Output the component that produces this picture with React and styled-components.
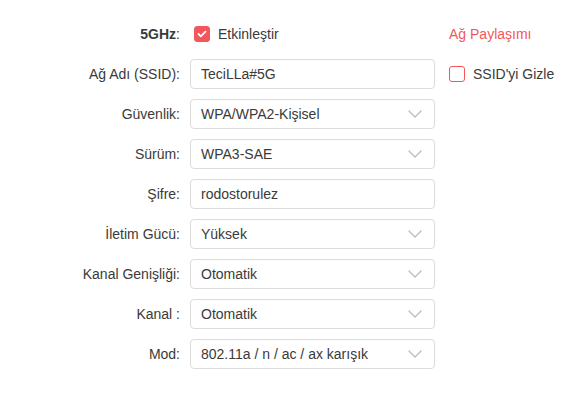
import React from "react";
import styled, { createGlobalStyle } from "styled-components";

const Global = createGlobalStyle`
  html, body { margin: 0; padding: 0; background: #fff; }
  body { font-family: Arial, "Liberation Sans", Helvetica, sans-serif; font-size: 14px; color: #333; }
`;

const Form = styled.div`
  display: grid;
  grid-template-columns: 180px 245px auto;
  column-gap: 10px;
  row-gap: 10px;
  grid-auto-rows: 30px;
  padding-top: 19px;
  width: 585px;
`;

const Label = styled.div`
  display: flex;
  align-items: center;
  justify-content: flex-end;
  color: #3a3a3a;
  font-size: 14px;
  white-space: nowrap;
`;

const Strong = styled.b`
  font-weight: bold;
`;

const Cell = styled.div`
  display: flex;
  align-items: center;
  gap: 8px;
  padding-left: 4px;
  font-size: 14px;
  color: #3a3a3a;
  white-space: nowrap;
`;

const Box = styled.span`
  box-sizing: border-box;
  width: 16px;
  height: 16px;
  border-radius: 3px;
  display: inline-flex;
  align-items: center;
  justify-content: center;
  background: ${(p) => (p.$checked ? "#f2575c" : "#fff")};
  border: 1px solid #f2575c;
`;

const Link = styled.span`
  color: #f2575c;
  font-size: 14px;
`;

const Field = styled.div`
  box-sizing: border-box;
  height: 30px;
  border: 1px solid #dcdcdc;
  border-radius: 4px;
  display: flex;
  align-items: center;
  justify-content: space-between;
  padding: 0 12px 0 10px;
  font-size: 14px;
  color: #3a3a3a;
  background: #fff;
`;

const Empty = styled.div``;

const Chevron = () => (
  <svg width="14" height="8" viewBox="0 0 14 8" fill="none">
    <path d="M1 1l6 6 6-6" stroke="#bcbcbc" strokeWidth="1.3" strokeLinecap="round" strokeLinejoin="round" />
  </svg>
);

const Check = () => (
  <svg width="10" height="8" viewBox="0 0 10 8" fill="none">
    <path d="M1.5 4l2.3 2.3L8.5 1.6" stroke="#fff" strokeWidth="1.8" strokeLinecap="round" strokeLinejoin="round" />
  </svg>
);

const rows = [
  { label: "Ağ Adı (SSID):", value: "TeciLLa#5G", select: false, extra: "ssid" },
  { label: "Güvenlik:", value: "WPA/WPA2-Kişisel", select: true },
  { label: "Sürüm:", value: "WPA3-SAE", select: true },
  { label: "Şifre:", value: "rodostorulez", select: false },
  { label: "İletim Gücü:", value: "Yüksek", select: true },
  { label: "Kanal Genişliği:", value: "Otomatik", select: true },
  { label: "Kanal :", value: "Otomatik", select: true },
  { label: "Mod:", value: "802.11a / n / ac / ax karışık", select: true },
];

export default function App() {
  return (
    <>
      <Global />
      <Form>
        <Label>
          <Strong>5GHz</Strong>:
        </Label>
        <Cell>
          <Box $checked>
            <Check />
          </Box>
          Etkinleştir
        </Cell>
        <Cell>
          <Link>Ağ Paylaşımı</Link>
        </Cell>
        {rows.map((r) => (
          <React.Fragment key={r.label}>
            <Label>{r.label}</Label>
            <Field>
              <span>{r.value}</span>
              {r.select && <Chevron />}
            </Field>
            {r.extra === "ssid" ? (
              <Cell>
                <Box />
                SSID'yi Gizle
              </Cell>
            ) : (
              <Empty />
            )}
          </React.Fragment>
        ))}
      </Form>
    </>
  );
}
